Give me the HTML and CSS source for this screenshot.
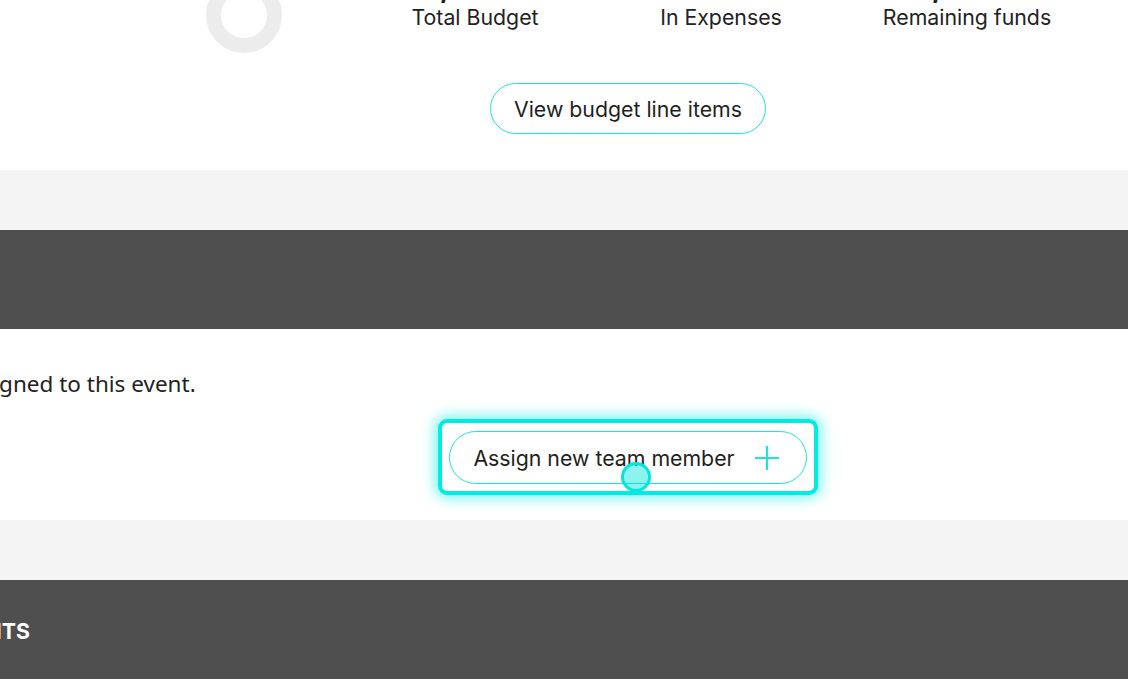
FILE: index.html
```html
<!DOCTYPE html>
<html lang="en">
<head>
<meta charset="utf-8">
<title>Event budget and team</title>
<link rel="stylesheet" href="styles.css">
</head>
<body>
<div class="viewport">
  <div class="doc">
    <section class="budget">
      <div class="stats">
        <svg class="donut" width="76" height="76" viewBox="0 0 76 76" aria-hidden="true">
          <circle cx="38" cy="38" r="30.5" fill="none" stroke="#ececec" stroke-width="15"/>
        </svg>
        <div class="stat">
          <div class="stat-value">$12,500.00</div>
          <div class="stat-label">Total Budget</div>
        </div>
        <div class="stat">
          <div class="stat-value">$0.00</div>
          <div class="stat-label">In Expenses</div>
        </div>
        <div class="stat">
          <div class="stat-value">$12,500.00</div>
          <div class="stat-label">Remaining funds</div>
        </div>
      </div>
      <div class="center-row">
        <button class="pill-btn" type="button">View budget line items</button>
      </div>
    </section>

    <div class="spacer"></div>

    <header class="band-head"><h2>TEAM</h2></header>

    <section class="team">
      <p class="empty-msg">No team members are assigned to this event.</p>
      <div class="center-row">
        <div class="focus-ring">
          <button class="pill-btn assign-btn" type="button">
            <span>Assign new team member</span>
            <svg class="plus" width="26" height="26" viewBox="0 0 26 26" aria-hidden="true">
              <path d="M13 1v24M1 13h24" stroke="#1de3da" stroke-width="2.2" fill="none"/>
            </svg>
          </button>
          <span class="cursor-dot"></span>
        </div>
      </div>
    </section>

    <div class="spacer"></div>

    <header class="band-head"><h2>EVENT PERMITS</h2></header>
  </div>
</div>
</body>
</html>
```

FILE: styles.css
```css
html, body {
  margin: 0;
  padding: 0;
  background: #ffffff;
}

body {
  font-family: Inter, "Noto Sans", sans-serif;
  color: #222222;
}

.viewport {
  width: 1128px;
  height: 686px;
  overflow: hidden;
}

.doc {
  width: 1428px;
  margin-left: -300px;
  margin-top: -60px;
}

/* budget section */
.budget {
  background: #ffffff;
  padding: 26px 0 36px;
}

.stats {
  display: flex;
  align-items: flex-start;
  padding-left: 506px;
  height: 87px;
}

.donut {
  display: block;
  margin-top: 11px;
  margin-right: 70px;
  flex: none;
}

.stat {
  width: 246px;
  text-align: center;
  flex: none;
}

.stat-value {
  font-size: 32px;
  font-weight: 700;
  line-height: 39px;
  color: #222222;
}

.stat-label {
  font-size: 21.3px;
  line-height: 24px;
  color: #222222;
}

.center-row {
  display: flex;
  justify-content: center;
  padding-left: 428px;
}

.budget .center-row {
  margin-top: 30px;
}

.pill-btn {
  font-family: Inter, "Noto Sans", sans-serif;
  font-size: 21.3px;
  color: #1f1f1f;
  background: #ffffff;
  border: 1px solid #1de3da;
  border-radius: 999px;
  height: 51px;
  padding: 0 23px;
  line-height: 24px;
  cursor: pointer;
}

.spacer {
  height: 60px;
  background: #f4f4f4;
}

.band-head {
  background: #4f4f4f;
  height: 99px;
  box-sizing: border-box;
  padding: 39px 0 0 158px;
}

.band-head h2 {
  margin: 0;
  font-family: Inter, "Noto Sans", sans-serif;
  font-size: 21.3px;
  line-height: 24px;
  font-weight: 700;
  color: #ffffff;
}

/* team section */
.team {
  background: #ffffff;
  padding: 41px 0 25px;
}

.empty-msg {
  margin: 0 0 21px;
  padding-left: 15px;
  font-family: "Noto Sans", "Open Sans", sans-serif;
  font-size: 22.5px;
  line-height: 28px;
  color: #222222;
}

.focus-ring {
  position: relative;
  border: 4px solid #00ece2;
  border-radius: 9px;
  padding: 8px 7px 7px;
  background: #ffffff;
  box-shadow: 0 0 14px 3px rgba(0, 236, 226, 0.55);
}

.assign-btn {
  display: flex;
  align-items: center;
  gap: 19px;
  height: 53px;
  padding: 0 26px 0 23px;
}

.plus {
  display: block;
  flex: none;
}

.cursor-dot {
  position: absolute;
  left: 179px;
  top: 39px;
  width: 24px;
  height: 24px;
  border: 3px solid #00e5dc;
  border-radius: 50%;
  background: rgba(0, 229, 220, 0.45);
}
```
